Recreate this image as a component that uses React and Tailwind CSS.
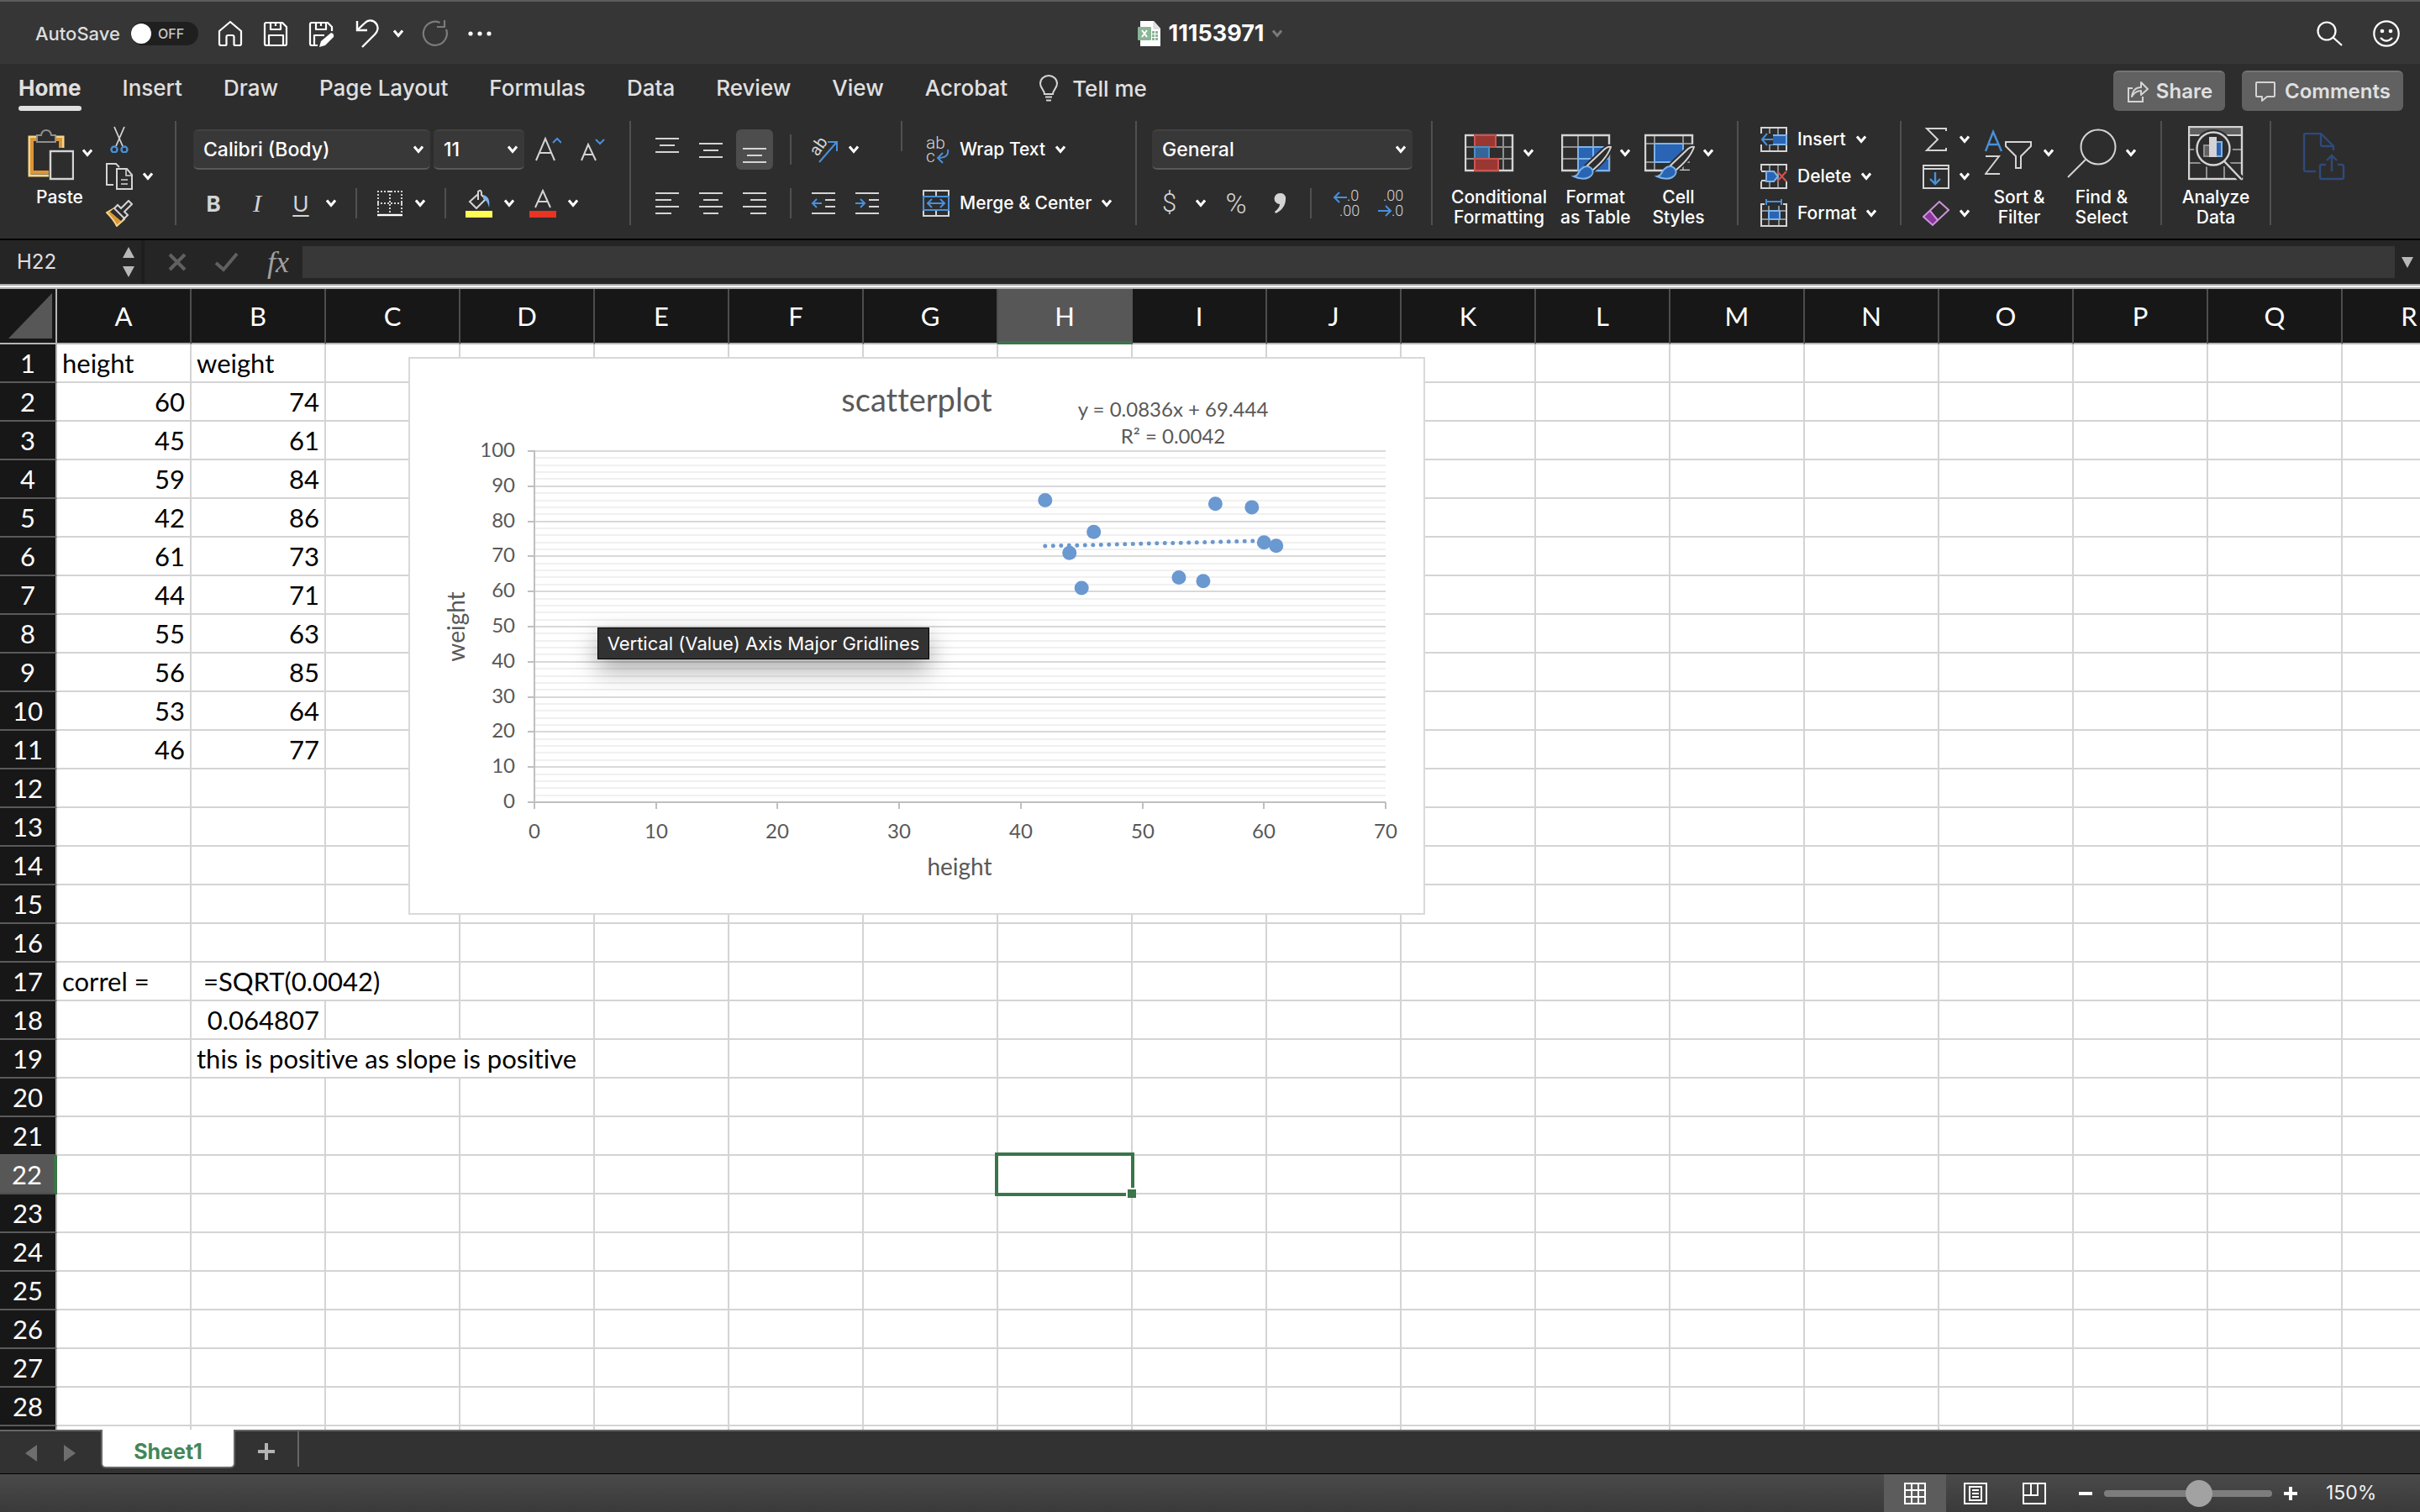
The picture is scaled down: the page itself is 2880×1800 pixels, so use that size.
import { useState } from 'react'

const columns = 'ABCDEFGHIJKLMNOPQR'.split('')
const rows = Array.from({ length: 29 }, (_, i) => i + 1)

const points = [
  [60, 74], [45, 61], [59, 84], [42, 86], [61, 73],
  [44, 71], [55, 63], [56, 85], [53, 64], [46, 77],
]

// cells that hold something other than the height / weight data
const extraCells = {
  A1: { text: 'height' },
  B1: { text: 'weight' },
  A17: { text: 'correl =' },
  B17: { text: ' =SQRT(0.0042)', span: 2 },
  B18: { text: '0.064807', right: true },
  B19: { text: 'this is positive as slope is positive', span: 3 },
}

function getCell(col, row) {
  if (row >= 2 && row <= 11 && (col === 'A' || col === 'B')) {
    return { text: points[row - 2][col === 'A' ? 0 : 1], right: true }
  }
  return extraCells[col + row] || {}
}

const tabs = ['Home', 'Insert', 'Draw', 'Page Layout', 'Formulas', 'Data', 'Review', 'View', 'Acrobat']

export default function App() {
  return (
    <div className="flex h-screen flex-col overflow-hidden bg-[#2d2d2d] font-['Inter',sans-serif] text-white">
      <TitleBar />
      <TabBar />
      <Ribbon />
      <FormulaBar />
      <Sheet />
      <SheetTabs />
      <StatusBar />
    </div>
  )
}

function Icon({ w, h, children, label }) {
  return (
    <svg
      width={w}
      height={h}
      viewBox={`0 0 ${w} ${h}`}
      fill="none"
      stroke="#d4d4d4"
      strokeWidth="2"
      className="shrink-0"
      aria-label={label}
    >
      {children}
    </svg>
  )
}

function Caret({ color = '#ffffff' }) {
  return (
    <svg width="12" height="10" viewBox="0 0 12 10" fill="none" stroke={color} strokeWidth="3" className="shrink-0">
      <path d="M1 1.5 6 7.5 11 1.5" />
    </svg>
  )
}

function TitleBar() {
  const [autoSave, setAutoSave] = useState(false)
  return (
    <header className="grid h-[76px] shrink-0 grid-cols-[1fr_auto_1fr] items-center border-t-2 border-[#5c5c5c] bg-[#363636] px-6 pt-[2px]">
      <div className="flex items-center gap-[22px] pl-[18px]">
        <label className="flex w-[194px] items-center justify-between text-[22px] font-medium text-[#dddddd]">
          AutoSave
          <input
            type="checkbox"
            className="sr-only"
            checked={autoSave}
            onChange={(e) => setAutoSave(e.target.checked)}
          />
          <span className="flex h-7 w-20 items-center gap-2 rounded-full bg-[#1f1f1f] text-[16px] text-[#c8c8c8]">
            <span className="h-6 w-6 rounded-full bg-white" />
            OFF
          </span>
        </label>
        <button><HomeIcon /></button>
        <button><SaveIcon /></button>
        <button><SaveEditIcon /></button>
        <button className="flex items-center gap-4">
          <Icon w={32} h={34} label="Undo">
            <g stroke="#fff" strokeWidth="2.4">
              <path d="M5 2V13H17" />
              <path d="M5 13 14 4.500C19-.5 25 1 28 5.500 31 10 29 15 26 18L11 33" />
            </g>
          </Icon>
          <Caret />
        </button>
        <button>
          <Icon w={32} h={34} label="Redo">
            <g stroke="#7c7c7c" strokeWidth="2.2">
              <path d="M21.500 4A14 14 0 1 0 29 12" />
              <path d="M27 1V9H18" />
            </g>
          </Icon>
        </button>
        <button>
          <Icon w={32} h={34} label="More">
            <g fill="#fff" stroke="none">
              <circle cx="4" cy="17" r="2.600" />
              <circle cx="15" cy="17" r="2.600" />
              <circle cx="26" cy="17" r="2.600" />
            </g>
          </Icon>
        </button>
      </div>
      <button className="flex items-center gap-[10px] text-[27px] font-bold">
        <Icon w={27} h={30} label="Workbook">
          <path d="M3 0H19L27 9V30H3Z" fill="#fff" stroke="none" />
          <path d="M19 0V9H27" fill="#e2e2e2" stroke="#cfcfcf" strokeWidth="1" />
          <rect x="0" y="7" width="16" height="16" rx="1" fill="#8ab596" stroke="none" />
          <path d="M5 11 11 19M11 11 5 19" stroke="#fff" />
          <g fill="#8ab596" stroke="none">
            <rect x="17" y="12" width="3" height="3" /><rect x="21" y="12" width="3" height="3" />
            <rect x="17" y="16" width="3" height="3" /><rect x="21" y="16" width="3" height="3" />
            <rect x="17" y="20" width="3" height="3" /><rect x="21" y="20" width="3" height="3" />
          </g>
        </Icon>
        11153971
        <Caret color="#7a7a7a" />
      </button>
      <div className="flex items-center justify-end gap-9">
        <button>
          <Icon w={32} h={34} label="Search">
            <g stroke="#fff" strokeWidth="2.2">
              <circle cx="13" cy="14" r="10.500" />
              <path d="M20.500 21.500 31 31" />
            </g>
          </Icon>
        </button>
        <button>
          <Icon w={32} h={34} label="Feedback">
            <g stroke="#fff" strokeWidth="2.2">
              <circle cx="16" cy="17" r="14.700" />
              <path d="M9 22Q16 29 23 22" />
              <g fill="#fff" stroke="none">
                <circle cx="11" cy="14" r="2.300" />
                <circle cx="21" cy="14" r="2.300" />
              </g>
            </g>
          </Icon>
        </button>
      </div>
    </header>
  )
}

function HomeIcon() {
  return (
    <Icon w={32} h={34} label="Home">
      <path
        stroke="#fff"
        strokeWidth="2.2"
        strokeLinejoin="round"
        d="M3 14 16 3 29 14V29Q29 31 27 31H22Q20.500 31 20.500 29.500V21Q20.500 19 18.500 19H13.500Q11.500 19 11.500 21V29.500Q11.500 31 10 31H5Q3 31 3 29Z"
      />
    </Icon>
  )
}

function SaveIcon() {
  return (
    <Icon w={32} h={34} label="Save">
      <g stroke="#fff" strokeWidth="2.2" strokeLinejoin="round">
        <path d="M5 4H24L29 9V29Q29 31 27 31H5Q3 31 3 29V6Q3 4 5 4Z" />
        <path d="M10 4V12H22V4M16 4V8" />
        <path d="M8 31V19H25V31" />
      </g>
    </Icon>
  )
}

function SaveEditIcon() {
  return (
    <Icon w={32} h={34} label="Save as">
      <g stroke="#fff" strokeWidth="2.2" strokeLinejoin="round">
        <path d="M12 31H5Q3 31 3 29V6Q3 4 5 4H24L29 9V14" />
        <path d="M10 4V12H22V4M16 4V8" />
        <path d="M8 31V19H20" />
      </g>
      <path d="M28 16Q32 17 31 21L21 31 14 33 16 26Z" fill="#fff" stroke="none" />
    </Icon>
  )
}

function TabBar() {
  return (
    <nav className="flex h-[68px] shrink-0 items-start justify-between pr-5 pl-[22px] text-[26px] text-[#e0e0e0]">
      <div className="flex gap-[49px] pt-3">
        {tabs.map((tab) => (
          <a
            key={tab}
            href="#"
            className={
              tab === 'Home'
                ? 'flex h-[44px] flex-col justify-between font-bold after:h-[6px] after:rounded-full after:bg-[#e0e0e0]'
                : 'flex h-[44px] flex-col font-medium'
            }
          >
            <span className="leading-[34px]">{tab}</span>
          </a>
        ))}
        <button className="-ml-3 flex h-[34px] items-center gap-4 font-medium">
          <Icon w={24} h={32} label="Tell me">
            <path d="M7 23C7 18 2 16 2 10.500A10 9.500 0 0 1 22 10.500C22 16 17 18 17 23Z" />
            <path d="M8 26.500H16M9 30.500H15" />
          </Icon>
          Tell me
        </button>
      </div>
      <div className="flex gap-5 pt-2 text-[24px] font-semibold">
        <button className="flex h-12 w-[133px] items-center justify-center gap-2 rounded-md border-t-2 border-[#757575] bg-[#616161]">
          <Icon w={28} h={28} label="Share">
            <path d="M8 10H3V26H20V20" />
            <path d="M7 20C8 13 12 9 18 9V3L26 11 18 18V13C13 13 10 15 7 20Z" strokeLinejoin="round" />
          </Icon>
          Share
        </button>
        <button className="flex h-12 w-[192px] items-center justify-center gap-[10px] rounded-md border-t-2 border-[#757575] bg-[#616161]">
          <Icon w={26} h={28} label="Comments">
            <path d="M3 3H23Q24 3 24 4V19Q24 20 23 20H15L9 25V20H3Q2 20 2 19V4Q2 3 3 3Z" strokeLinejoin="round" />
          </Icon>
          Comments
        </button>
      </div>
    </nav>
  )
}

function Ribbon() {
  return (
    <section className="flex h-[142px] shrink-0 items-start border-b-2 border-black">
      <ClipboardGroup />
      <FontGroup />
      <AlignGroup />
      <NumberGroup />
      <StylesGroup />
      <CellsGroup />
      <EditingGroup />
      <div className="flex h-[124px] w-[130px] justify-center border-r-2 border-[#505050]">
        <BigButton icon={<AnalyzeIcon />} lines={['Analyze', 'Data']} noCaret />
      </div>
      <button className="pt-[14px] pl-[37px]">
        <Icon w={52} h={58} label="Create PDF">
          <g stroke="#2f4a7c" strokeWidth="2.4">
            <path d="M16 46H4Q2 46 2 44V3Q2 1 4 1H22L37 16V21" />
            <path d="M22 1V14Q22 16 24 16H37" />
            <path d="M28 38H23Q21 38 21 40V53Q21 55 23 55H47Q49 55 49 53V40Q49 38 47 38H42" />
            <path d="M35 46V27M29 33 35 27 41 33" />
          </g>
        </Icon>
      </button>
    </section>
  )
}

function Divider() {
  return <span className="h-9 w-[2px] shrink-0 bg-[#505050]" />
}

// large ribbon button: picture and caret on top, one or two lines of text under it
function BigButton({ icon, lines, noCaret }) {
  return (
    <button className="flex shrink-0 flex-col items-center self-start">
      <span className="flex h-[79px] items-start gap-[10px] pt-[6px]">
        {icon}
        {!noCaret && (
          <span className="pt-[27px]">
            <Caret />
          </span>
        )}
      </span>
      {lines.map((line) => (
        <span key={line} className="text-[21px] leading-6 font-medium whitespace-nowrap">
          {line}
        </span>
      ))}
    </button>
  )
}

function ClipboardGroup() {
  return (
    <div className="flex h-[124px] w-[210px] gap-4 border-r-2 border-[#505050] pl-8">
      <BigButton
        lines={['Paste']}
        icon={
          <Icon w={56} h={66} label="Paste">
            <path d="M26 59H3V13H43V26" stroke="#f3d68b" strokeWidth="3" />
            <path d="M26 55H6V16H40V26" stroke="#dd9537" strokeWidth="4" />
            <path d="M12 19V11H17C18 3 28 3 29 11H34V19Z" fill="#2d2d2d" stroke="#8f8f8f" />
            <rect x="28" y="30" width="27" height="33" fill="#2d2d2d" stroke="#d4d4d4" strokeWidth="2.4" />
          </Icon>
        }
      />
      <div className="flex flex-col gap-3 pt-[6px]">
        <button>
          <Icon w={32} h={32} label="Cut">
            <path d="M10 1 20 24M22 1 12 24" strokeWidth="1.8" />
            <g stroke="#4a90d9" strokeWidth="2.4">
              <circle cx="10" cy="28" r="3.500" />
              <circle cx="22" cy="28" r="3.500" />
            </g>
          </Icon>
        </button>
        <button className="flex items-center gap-3">
          <Icon w={32} h={32} label="Copy">
            <path d="M9 26H1V1H12L16 5" />
            <path d="M13 7H25L31 14V31H13Z" />
            <path d="M24 7V15H31M18 20H26M18 25H26" strokeWidth="1.6" />
          </Icon>
          <Caret />
        </button>
        <button>
          <Icon w={32} h={32} label="Format painter">
            <path d="M1 15 10 10 22 23 13 31C10 25 6 20 1 15Z" fill="#dd9537" stroke="#f3d68b" />
            <path d="M5 14 11 9 22 20 18 25Z" fill="#2d2d2d" stroke="none" />
            <path d="M10 10 14 6 18 10 27 1 31 5 22 14 26 18 22 22Z" />
          </Icon>
        </button>
      </div>
    </div>
  )
}

function RibbonSelect({ label, value, width }) {
  return (
    <span className={`relative flex ${width} items-center`}>
      <select
        aria-label={label}
        defaultValue={value}
        className="h-12 w-full appearance-none rounded-md border-t-2 border-b-2 border-t-[#424242] border-b-[#595959] bg-[#383838] px-3 text-[23px] font-medium outline-none"
      >
        <option>{value}</option>
      </select>
      <span className="pointer-events-none absolute right-2">
        <Caret />
      </span>
    </span>
  )
}

function FontGroup() {
  return (
    <div className="flex h-[124px] w-[541px] flex-col gap-4 border-r-2 border-[#505050] pt-[10px] pl-5">
      <div className="flex h-12 items-center gap-1">
        <RibbonSelect label="Font" value="Calibri (Body)" width="w-[282px]" />
        <RibbonSelect label="Font size" value="11" width="w-[108px]" />
        <div className="flex gap-5 pl-2">
          <button>
            <Icon w={32} h={32} label="Increase font size">
              <path d="M2 29 13 3 24 29M6 20H20" />
              <path d="M22 8 27 3 32 8" stroke="#4a90d9" />
            </Icon>
          </button>
          <button>
            <Icon w={32} h={32} label="Decrease font size">
              <path d="M4 29 12 10 21 29M7 22H18" />
              <path d="M21 4 26 9 31 4" stroke="#4a90d9" />
            </Icon>
          </button>
        </div>
      </div>
      <div className="flex h-12 items-center gap-[23px] pl-2 text-[26px] text-[#d4d4d4]">
        <div className="flex items-center gap-5">
          <button className="w-8 font-bold">B</button>
          <button className="w-8 font-['Liberation_Serif',serif] text-[30px] leading-8 italic">I</button>
          <div className="flex items-center gap-[14px]">
            <button className="w-8 underline decoration-2 underline-offset-4">U</button>
            <Caret />
          </div>
        </div>
        <Divider />
        <div className="flex items-center gap-[14px]">
          <button>
            <Icon w={32} h={32} label="Borders">
              <path d="M1 2H31M1 16H31M2 1V27M16 1V27M30 1V27" strokeDasharray="2 2" />
              <path d="M1 30H31" stroke="#fff" strokeWidth="2.4" />
            </Icon>
          </button>
          <Caret />
        </div>
        <Divider />
        <div className="flex items-center gap-[14px]">
          <button>
            <Icon w={32} h={34} label="Fill color">
              <path d="M15 6 5 15 13 23 24 12 19 7V4Q18 0 15 3V13" />
              <path d="M21 7Q30 9 28 22 26 13 21 12Z" fill="#7db4e8" stroke="none" />
              <rect x="0" y="26" width="32" height="8" fill="#fffd54" stroke="none" />
            </Icon>
          </button>
          <Caret />
          <button className="pl-1">
            <Icon w={32} h={34} label="Font color">
              <path d="M7 22 16 2 25 22M10 15H22" />
              <rect x="0" y="26" width="32" height="8" fill="#e93323" stroke="none" />
            </Icon>
          </button>
          <Caret />
        </div>
      </div>
    </div>
  )
}

// stack of text lines, each given as [x1, x2]
function LinesIcon({ label, top, lines, children }) {
  return (
    <Icon w={30} h={32} label={label}>
      {lines.map(([a, b], i) => (
        <path key={i} d={`M${a} ${top + i * 8}H${b}`} />
      ))}
      {children}
    </Icon>
  )
}

function AlignGroup() {
  const full = [1, 29]
  const mid = [6, 24]
  return (
    <div className="flex h-[124px] w-[602px] items-start border-r-2 border-[#505050] pl-[21px]">
      <div className="flex w-[300px] flex-col gap-4 pt-[10px]">
        <div className="flex h-12 items-center gap-5">
          <div className="flex gap-2">
            <button className="flex h-12 w-11 items-center justify-center">
              <LinesIcon label="Top align" top={3} lines={[full, mid, full]} />
            </button>
            <button className="flex h-12 w-11 items-center justify-center">
              <LinesIcon label="Middle align" top={9} lines={[full, mid, full]} />
            </button>
            <button className="flex h-12 w-11 items-center justify-center rounded-md bg-[#4d4d4d]">
              <LinesIcon label="Bottom align" top={15} lines={[full, mid, full]} />
            </button>
          </div>
          <Divider />
          <button className="flex items-center gap-3">
            <Icon w={36} h={34} label="Orientation">
              <text transform="translate(11 26) rotate(-55)" fill="#d4d4d4" stroke="none" fontSize="20" className="font-['Roboto',sans-serif]">ab</text>
              <path d="M13 32 33 9M23 8H34V19" stroke="#4a90d9" />
            </Icon>
            <Caret />
          </button>
        </div>
        <div className="flex h-12 items-center gap-5">
          <div className="flex gap-2">
            <button className="flex w-11 justify-center">
              <LinesIcon label="Align left" top={4} lines={[full, [1, 20], full, [1, 20]]} />
            </button>
            <button className="flex w-11 justify-center">
              <LinesIcon label="Center" top={4} lines={[full, mid, full, mid]} />
            </button>
            <button className="flex w-11 justify-center">
              <LinesIcon label="Align right" top={4} lines={[full, [10, 29], full, [10, 29]]} />
            </button>
          </div>
          <Divider />
          <div className="flex gap-4">
            <button className="flex w-9 justify-center">
              <LinesIcon label="Decrease indent" top={4} lines={[full, [17, 29], [17, 29], full]}>
                <path d="M2 16H13M7 11 2 16 7 21" stroke="#4a90d9" />
              </LinesIcon>
            </button>
            <button className="flex w-9 justify-center">
              <LinesIcon label="Increase indent" top={4} lines={[full, [17, 29], [17, 29], full]}>
                <path d="M1 16H12M7 11 12 16 7 21" stroke="#4a90d9" />
              </LinesIcon>
            </button>
          </div>
        </div>
      </div>
      <Divider />
      <div className="flex flex-col gap-4 pt-[10px] pl-6 text-[21px] font-medium">
        <button className="flex h-12 items-center gap-3">
          <Icon w={32} h={36} label="Wrap text">
            <g fill="#d4d4d4" stroke="none" fontSize="21" className="font-['Roboto',sans-serif] font-light">
              <text x="4" y="17">ab</text>
              <text x="4" y="33">c</text>
            </g>
            <path d="M30 18Q32 28 18 28M24 22 18 28 24 34" stroke="#4a90d9" />
          </Icon>
          <span className="whitespace-nowrap">Wrap Text</span>
          <Caret />
        </button>
        <button className="flex h-12 items-center gap-3">
          <Icon w={32} h={32} label="Merge">
            <path d="M1 1H31V31H1ZM16 1V8M16 24V31" />
            <rect x="1" y="8" width="30" height="16" fill="#2d2d2d" stroke="#4a90d9" />
            <path d="M6 16H26M11 11 6 16 11 21M21 11 26 16 21 21" stroke="#4a90d9" />
          </Icon>
          <span className="whitespace-nowrap">Merge &amp; Center</span>
          <Caret />
        </button>
      </div>
    </div>
  )
}

function NumberGroup() {
  return (
    <div className="flex h-[124px] w-[352px] flex-col gap-4 border-r-2 border-[#505050] pt-[10px] pl-[18px]">
      <RibbonSelect label="Number format" value="General" width="w-[310px]" />
      <div className="flex h-12 items-center gap-5 pl-3 text-[#d4d4d4]">
        <button className="flex w-[52px] items-center justify-between">
          <span className="font-['Roboto',sans-serif] text-[31px] leading-9 font-light">$</span>
          <Caret />
        </button>
        <button className="w-8 font-['Roboto',sans-serif] text-[34px] leading-9 font-light">%</button>
        <button className="flex w-8 justify-center">
          <Icon w={16} h={28} label="Comma style">
            <path d="M8 2A6 6 0 0 1 15 9C15 17 10 23 3 26L2 24C6 21 8 18 8 15A6.500 6.500 0 0 1 8 2Z" fill="#d4d4d4" stroke="none" />
          </Icon>
        </button>
        <Divider />
        <button className="pl-1">
          <Icon w={34} h={36} label="Increase decimal">
            <g fill="#d4d4d4" stroke="none" fontSize="18" className="font-['Roboto',sans-serif] font-light">
              <text x="18" y="15">.0</text>
              <text x="9" y="33">.00</text>
            </g>
            <path d="M3 11H18M9 5 3 11 9 17" stroke="#4a90d9" />
          </Icon>
        </button>
        <button>
          <Icon w={34} h={36} label="Decrease decimal">
            <g fill="#d4d4d4" stroke="none" fontSize="18" className="font-['Roboto',sans-serif] font-light">
              <text x="7" y="15">.00</text>
              <text x="17" y="33">.0</text>
            </g>
            <path d="M1 27H16M10 21 16 27 10 33" stroke="#4a90d9" />
          </Icon>
        </button>
      </div>
    </div>
  )
}

function Brush() {
  return (
    <>
      <path d="M59 25C56 24 52 27 50 29L31 47 37 53C45 46 55 37 59 25Z" fill="#2d2d2d" stroke="#2d2d2d" strokeWidth="6" />
      <path d="M59 25C56 24 52 27 50 29L31 47 37 53C45 46 55 37 59 25Z" fill="#2d2d2d" />
      <path d="M37 52C40 59 30 67 15 60 21 59 20 54 24 51 28 47 34 47 37 52Z" fill="#2a64b4" stroke="#7db4e8" />
    </>
  )
}

function StylesGroup() {
  return (
    <div className="flex h-[124px] w-[364px] gap-4 border-r-2 border-[#505050] pl-[22px]">
      <BigButton
        lines={['Conditional', 'Formatting']}
        icon={
          <Icon w={60} h={66} label="Conditional formatting">
            <path d="M12 11V53M46 11V53M2 25H56M2 39H56" stroke="#8f8f8f" />
            <rect x="1" y="11" width="56" height="42" strokeWidth="2.4" />
            <rect x="29" y="26" width="16" height="12" fill="#2d2d2d" stroke="none" />
            <rect x="12" y="11" width="25" height="14" fill="#9b3733" stroke="#c95650" />
            <rect x="12" y="25" width="17" height="14" fill="#34659b" stroke="#4a90c0" />
            <rect x="12" y="39" width="28" height="14" fill="#9b3733" stroke="#c95650" />
          </Icon>
        }
      />
      <BigButton
        lines={['Format', 'as Table']}
        icon={
          <Icon w={60} h={66} label="Format as table">
            <path d="M20 11V53M38 11V53M2 25H56M2 39H56" stroke="#8f8f8f" />
            <path d="M1 11H57V53H1Z" strokeWidth="2.4" />
            <path d="M20 25H57V53H20ZM38 25V53M20 39H57" fill="#2a64b4" stroke="#7db4e8" />
            <Brush />
          </Icon>
        }
      />
      <BigButton
        lines={['Cell', 'Styles']}
        icon={
          <Icon w={60} h={66} label="Cell styles">
            <path d="M12 11V53M46 11V53M2 21H56M2 43H56" stroke="#8f8f8f" />
            <path d="M1 11H57V53H1Z" strokeWidth="2.4" />
            <rect x="12" y="21" width="34" height="22" fill="#2a64b4" stroke="#7db4e8" />
            <path d="M57 25V56H36V51" stroke="#2d2d2d" strokeWidth="6" />
            <Brush />
          </Icon>
        }
      />
    </div>
  )
}

function CellsGroup() {
  return (
    <div className="flex h-[124px] w-[194px] flex-col items-start border-r-2 border-[#505050] pl-[26px] text-[21px] font-medium">
      <button className="flex h-11 shrink-0 items-center gap-3">
        <Icon w={32} h={32} label="Insert cells">
          <path d="M11 2V30M21 2V30" stroke="#8f8f8f" />
          <rect x="1" y="2" width="30" height="28" />
          <rect x="11" y="11" width="20" height="11" fill="#2a64b4" stroke="#7db4e8" />
          <rect x="0" y="9" width="15" height="13" fill="#2d2d2d" stroke="none" />
          <path d="M2 16H15M8 9 2 16 8 23" stroke="#4a90d9" />
        </Icon>
        Insert
        <Caret />
      </button>
      <button className="flex h-11 shrink-0 items-center gap-3">
        <Icon w={32} h={32} label="Delete cells">
          <path d="M11 2V30M21 2V30" stroke="#8f8f8f" />
          <path d="M1 9V2H31V9M1 22V30H31V22M1 10H6M1 21H6" />
          <path d="M7 10H16L21 16 16 22H7Z" fill="#2a64b4" stroke="#7db4e8" />
          <path d="M20 10 31 22M31 10 20 22" stroke="#d6534d" />
        </Icon>
        Delete
        <Caret />
      </button>
      <button className="flex h-11 shrink-0 items-center gap-3">
        <Icon w={32} h={34} label="Format cells">
          <path d="M10 8V32M22 8V32M1 14H31M1 24H31" stroke="#8f8f8f" />
          <path d="M5 6H1V32H31V6H27" />
          <rect x="10" y="14" width="13" height="10" fill="#2a64b4" stroke="#7db4e8" />
          <path d="M7 3H25M7 0V7M25 0V7" stroke="#4a90d9" />
        </Icon>
        Format
        <Caret />
      </button>
    </div>
  )
}

function EditingGroup() {
  return (
    <div className="flex h-[124px] w-[310px] border-r-2 border-[#505050] pl-[25px]">
      <div className="flex w-[74px] flex-col">
        <button className="flex h-11 shrink-0 items-center gap-3">
          <Icon w={32} h={32} label="AutoSum">
            <path d="M28 6V3H5L18 16 5 29H28V26" />
          </Icon>
          <Caret />
        </button>
        <button className="flex h-11 shrink-0 items-center gap-3">
          <Icon w={32} h={32} label="Fill">
            <path d="M1 3H31V30H1ZM1 7H31" />
            <path d="M15 11V25M9 19 15 25 21 19" stroke="#4a90d9" strokeWidth="2.4" />
          </Icon>
          <Caret />
        </button>
        <button className="flex h-11 shrink-0 items-center gap-3">
          <Icon w={32} h={32} label="Clear">
            <path d="M1 20 8 13 18 24 12 30Z" fill="#8a35a0" stroke="none" />
            <path d="M20 2 31 12 12 30 1 20ZM9 13 18 24" stroke="#cf93dc" />
          </Icon>
          <Caret />
        </button>
      </div>
      <div className="flex gap-4">
        <BigButton
          lines={['Sort &', 'Filter']}
          icon={
            <Icon w={60} h={66} label="Sort and filter">
              <path d="M1 30 10 7 20 30M4 22H16" stroke="#4a90d9" strokeWidth="2.4" />
              <path d="M1 36H17L1 57H18" />
              <path d="M25 19H55V24L43 36V50H37V36L25 24Z" />
            </Icon>
          }
        />
        <BigButton
          lines={['Find &', 'Select']}
          icon={
            <Icon w={60} h={66} label="Find">
              <circle cx="37" cy="25" r="20.500" />
              <path d="M22 40 1 61" />
            </Icon>
          }
        />
      </div>
    </div>
  )
}

function AnalyzeIcon() {
  return (
    <Icon w={66} h={66} label="Analyze data">
      <path d="M2 28H64M2 44H64M22 48V64M43 48V64" stroke="#8f8f8f" />
      <rect x="2" y="2" width="62" height="8" fill="#606060" stroke="none" />
      <rect x="1" y="1" width="63" height="62" strokeWidth="2.4" />
      <path d="M1 11H64" />
      <path d="M44 43 63 63" stroke="#2d2d2d" strokeWidth="8" />
      <circle cx="30" cy="27" r="23" fill="#2d2d2d" stroke="none" />
      <circle cx="30" cy="27" r="19.500" fill="#2d2d2d" strokeWidth="2.4" />
      <path d="M43 42 63 63" strokeWidth="2.4" />
      <rect x="19" y="23" width="7" height="13" fill="#606060" stroke="#8f8f8f" />
      <rect x="33" y="19" width="7" height="17" fill="#2a64b4" stroke="#7db4e8" />
      <rect x="26" y="14" width="7" height="22" fill="#d4d4d4" stroke="#d4d4d4" />
    </Icon>
  )
}

function FormulaBar() {
  return (
    <div className="flex h-[58px] shrink-0 items-center bg-[#252525] pb-[6px] text-[24px] shadow-[inset_0_-2px_0_#b4b4b4,inset_0_-4px_0_#f8f8f8,inset_0_-6px_0_#aaaaaa]">
      <div className="flex h-full w-[172px] items-center justify-between border-r-4 border-[#1e1e1e] pr-2 pl-5">
        <input
          aria-label="Name box"
          defaultValue="H22"
          className="w-[100px] bg-transparent text-[#e0e0e0] outline-none"
        />
        <Icon w={14} h={36} label="Browse names">
          <path d="M7 0 14 13H0ZM7 36 0 23H14Z" fill="#b8b8b8" stroke="none" />
        </Icon>
      </div>
      <div className="flex items-center gap-8 pr-4 pl-7">
        <button>
          <Icon w={22} h={22} label="Cancel">
            <path d="M2 2 20 20M20 2 2 20" stroke="#606060" strokeWidth="4" />
          </Icon>
        </button>
        <button>
          <Icon w={32} h={24} label="Enter">
            <path d="M3 13 12 21 28 2" stroke="#606060" strokeWidth="4" />
          </Icon>
        </button>
        <button className="font-['Liberation_Serif',serif] text-[36px] leading-9 text-[#a0a0a0] italic">fx</button>
      </div>
      <input aria-label="Formula" className="h-[38px] min-w-0 flex-1 bg-[#383838] px-2 outline-none" />
      <button className="px-2">
        <Icon w={14} h={13} label="Expand">
          <path d="M0 0H14L7 13Z" fill="#b8b8b8" stroke="none" />
        </Icon>
      </button>
    </div>
  )
}

function Sheet() {
  return (
    <main className="relative min-h-0 flex-1 overflow-hidden bg-white font-['Lato',sans-serif] text-[31px] text-black [font-variant-ligatures:none]">
      <table className="w-[2948px] table-fixed border-separate border-spacing-0">
        <colgroup>
          <col className="w-[68px]" />
          {columns.map((c) => (
            <col key={c} className="w-[160px]" />
          ))}
        </colgroup>
        <thead>
          <tr className="h-[66px] text-white">
            <th className="border-r-2 border-b-2 border-[#b4b4b4] bg-[#171717] p-1">
              <svg width="58" height="54" viewBox="0 0 58 54" aria-label="Select all">
                <path d="M58 0V54H6Z" fill="#575757" />
              </svg>
            </th>
            {columns.map((c) => (
              <th
                key={c}
                scope="col"
                className={
                  c === 'H'
                    ? 'border-r-2 border-b-4 border-r-[#575757] border-b-[#3b7549] bg-[#575757] pt-[2px] font-normal'
                    : 'border-r-2 border-b-2 border-r-[#4d4d4d] border-b-[#b4b4b4] bg-[#171717] font-normal'
                }
              >
                {c}
              </th>
            ))}
          </tr>
        </thead>
        <tbody>
          {rows.map((r) => (
            <SheetRow key={r} r={r} />
          ))}
        </tbody>
      </table>
      <ScatterChart />
    </main>
  )
}

function SheetRow({ r }) {
  const cells = []
  for (let i = 0; i < columns.length; i++) {
    const { text, right, span = 1 } = getCell(columns[i], r)
    cells.push(
      <td
        key={columns[i]}
        colSpan={span}
        className={`relative border-r-2 border-b-2 border-[#d4d4d4] px-[6px] leading-10 whitespace-pre ${right ? 'text-right' : 'text-left'}`}
      >
        {text}
        {columns[i] === 'H' && r === 22 && <Selection />}
      </td>
    )
    i += span - 1
  }
  return (
    <tr className="h-[46px]">
      <th
        scope="row"
        className={
          r === 22
            ? 'border-r-4 border-b-2 border-r-[#3b7549] border-b-[#4d4d4d] bg-[#575757] leading-10 font-normal text-white'
            : 'border-r-2 border-b-2 border-r-[#b4b4b4] border-b-[#5a5a5a] bg-[#171717] leading-10 font-normal text-white'
        }
      >
        {r}
      </th>
      {cells}
    </tr>
  )
}

function Selection() {
  return (
    <span className="absolute -top-1 -right-1 -bottom-1 -left-1 z-10 border-4 border-[#3b7549]">
      <span className="absolute -right-[6px] -bottom-[6px] h-3 w-3 border-t-2 border-l-2 border-white bg-[#3b7549]" />
    </span>
  )
}

// plot area inside the 1210 x 664 chart
const px = (x) => 150 + (x * 1013) / 70
const py = (y) => 530 - (y * 418) / 100

function ScatterChart() {
  const minor = Array.from({ length: 50 }, (_, i) => (i + 1) * 2).filter((v) => v % 10)
  const major = Array.from({ length: 10 }, (_, i) => (i + 1) * 10)
  const fit = (x) => 0.0836 * x + 69.444
  return (
    <figure className="absolute top-[81px] left-[486px] h-[664px] w-[1210px] border-2 border-[#d9d9d9] bg-white">
      <svg width="1206" height="660" viewBox="2 2 1206 660" fill="#595959">
        {minor.map((v) => (
          <path key={v} d={`M150 ${Math.round(py(v))}H1163`} stroke="#f0f0f0" strokeWidth="2" />
        ))}
        {major.map((v) => (
          <path key={v} d={`M150 ${Math.round(py(v))}H1163`} stroke="#d9d9d9" strokeWidth="2" />
        ))}
        <path d="M142 530H1163M150 111V538" stroke="#bfbfbf" strokeWidth="2" fill="none" />
        {[0, ...major].map((v) => (
          <g key={v}>
            <path d={`M142 ${Math.round(py(v))}H150`} stroke="#bfbfbf" strokeWidth="2" />
            <text x="127" y={Math.round(py(v)) + 7} textAnchor="end" fontSize="24">{v}</text>
          </g>
        ))}
        {[0, 10, 20, 30, 40, 50, 60, 70].map((v) => (
          <g key={v}>
            <path d={`M${Math.round(px(v))} 530V538`} stroke="#bfbfbf" strokeWidth="2" />
            <text x={Math.round(px(v))} y="573" textAnchor="middle" fontSize="24">{v}</text>
          </g>
        ))}
        <line
          x1={px(42)}
          y1={py(fit(42))}
          x2={px(61)}
          y2={py(fit(61))}
          stroke="#6a98d0"
          strokeWidth="5"
          strokeLinecap="round"
          strokeDasharray="0 9.5"
        />
        {points.map(([x, y]) => (
          <circle key={x} cx={px(x)} cy={py(y)} r="8.500" fill="#6a98d0" />
        ))}
        <text x="605" y="65" textAnchor="middle" fontSize="38">scatterplot</text>
        <text x="910" y="71" textAnchor="middle" fontSize="24">y = 0.0836x + 69.444</text>
        <text x="910" y="103" textAnchor="middle" fontSize="24">R² = 0.0042</text>
        <text x="656" y="617" textAnchor="middle" fontSize="28">height</text>
        <text transform="rotate(-90 67 321)" x="67" y="321" textAnchor="middle" fontSize="28">weight</text>
      </svg>
      <div
        role="tooltip"
        className="absolute top-[320px] left-[223px] h-[38px] w-[395px] border border-black bg-[#323232] text-center font-['Inter',sans-serif] text-[22px] leading-9 whitespace-nowrap text-white shadow-[0_12px_30px_rgba(0,0,0,0.35)]"
      >
        Vertical (Value) Axis Major Gridlines
      </div>
    </figure>
  )
}

function SheetTabs() {
  return (
    <div className="flex h-[52px] shrink-0 items-start bg-[#323232] shadow-[inset_0_2px_0_#666666]">
      <div className="flex w-[120px] gap-8 pt-[18px] pl-[30px]">
        <button>
          <Icon w={14} h={20} label="Previous sheet"><path d="M14 0V20L0 10Z" fill="#6e6e6e" stroke="none" /></Icon>
        </button>
        <button>
          <Icon w={14} h={20} label="Next sheet"><path d="M0 0V20L14 10Z" fill="#6e6e6e" stroke="none" /></Icon>
        </button>
      </div>
      <button className="h-[46px] w-[160px] rounded-b-md border-x-2 border-b-2 border-[#666666] bg-white pt-2 text-[25px] font-bold text-[#438658]">
        Sheet1
      </button>
      <div className="flex h-[44px] w-[76px] items-center justify-center border-r-2 border-[#666666] pt-2">
        <button>
          <Icon w={20} h={20} label="Add sheet"><path d="M10 0V20M0 10H20" stroke="#b4b4b4" strokeWidth="4" /></Icon>
        </button>
      </div>
    </div>
  )
}

function StatusBar() {
  const [zoom, setZoom] = useState(58)
  return (
    <footer className="flex h-[46px] shrink-0 items-center justify-end border-t border-black bg-linear-to-b from-[#4a4a4a] to-[#3a3a3a] text-[23px]">
      <button className="flex h-full w-[74px] items-center justify-center bg-[#5c5c5c]">
        <Icon w={26} h={26} label="Normal view">
          <path d="M1 1H25V25H1ZM9 1V25M17 1V25M1 9H25M1 17H25" stroke="#fff" />
        </Icon>
      </button>
      <button className="flex w-[70px] justify-center">
        <Icon w={28} h={26} label="Page layout view">
          <path d="M1 1H27V25H1ZM7 5H21V21H7Z" stroke="#fff" />
          <path d="M10 9H18M10 13H18M10 17H18" stroke="#fff" />
        </Icon>
      </button>
      <button className="flex w-[70px] justify-center">
        <Icon w={28} h={26} label="Page break view">
          <path d="M1 1H27V25H1ZM10 1V15M1 15H18V1" stroke="#fff" />
        </Icon>
      </button>
      <div className="flex items-center gap-[14px] pl-[18px]">
        <button>
          <Icon w={16} h={16} label="Zoom out"><path d="M0 8H16" stroke="#fff" strokeWidth="4" /></Icon>
        </button>
        <input
          type="range"
          aria-label="Zoom"
          value={zoom}
          onChange={(e) => setZoom(Number(e.target.value))}
          className="h-2 w-[200px] appearance-none rounded-full bg-[#7d7d7d] [&::-webkit-slider-thumb]:h-8 [&::-webkit-slider-thumb]:w-8 [&::-webkit-slider-thumb]:appearance-none [&::-webkit-slider-thumb]:rounded-full [&::-webkit-slider-thumb]:bg-[#a2a2a2]"
        />
        <button>
          <Icon w={16} h={16} label="Zoom in"><path d="M0 8H16M8 0V16" stroke="#fff" strokeWidth="4" /></Icon>
        </button>
      </div>
      <span className="w-[146px] pl-[34px] text-[#f0f0f0]">150%</span>
    </footer>
  )
}
